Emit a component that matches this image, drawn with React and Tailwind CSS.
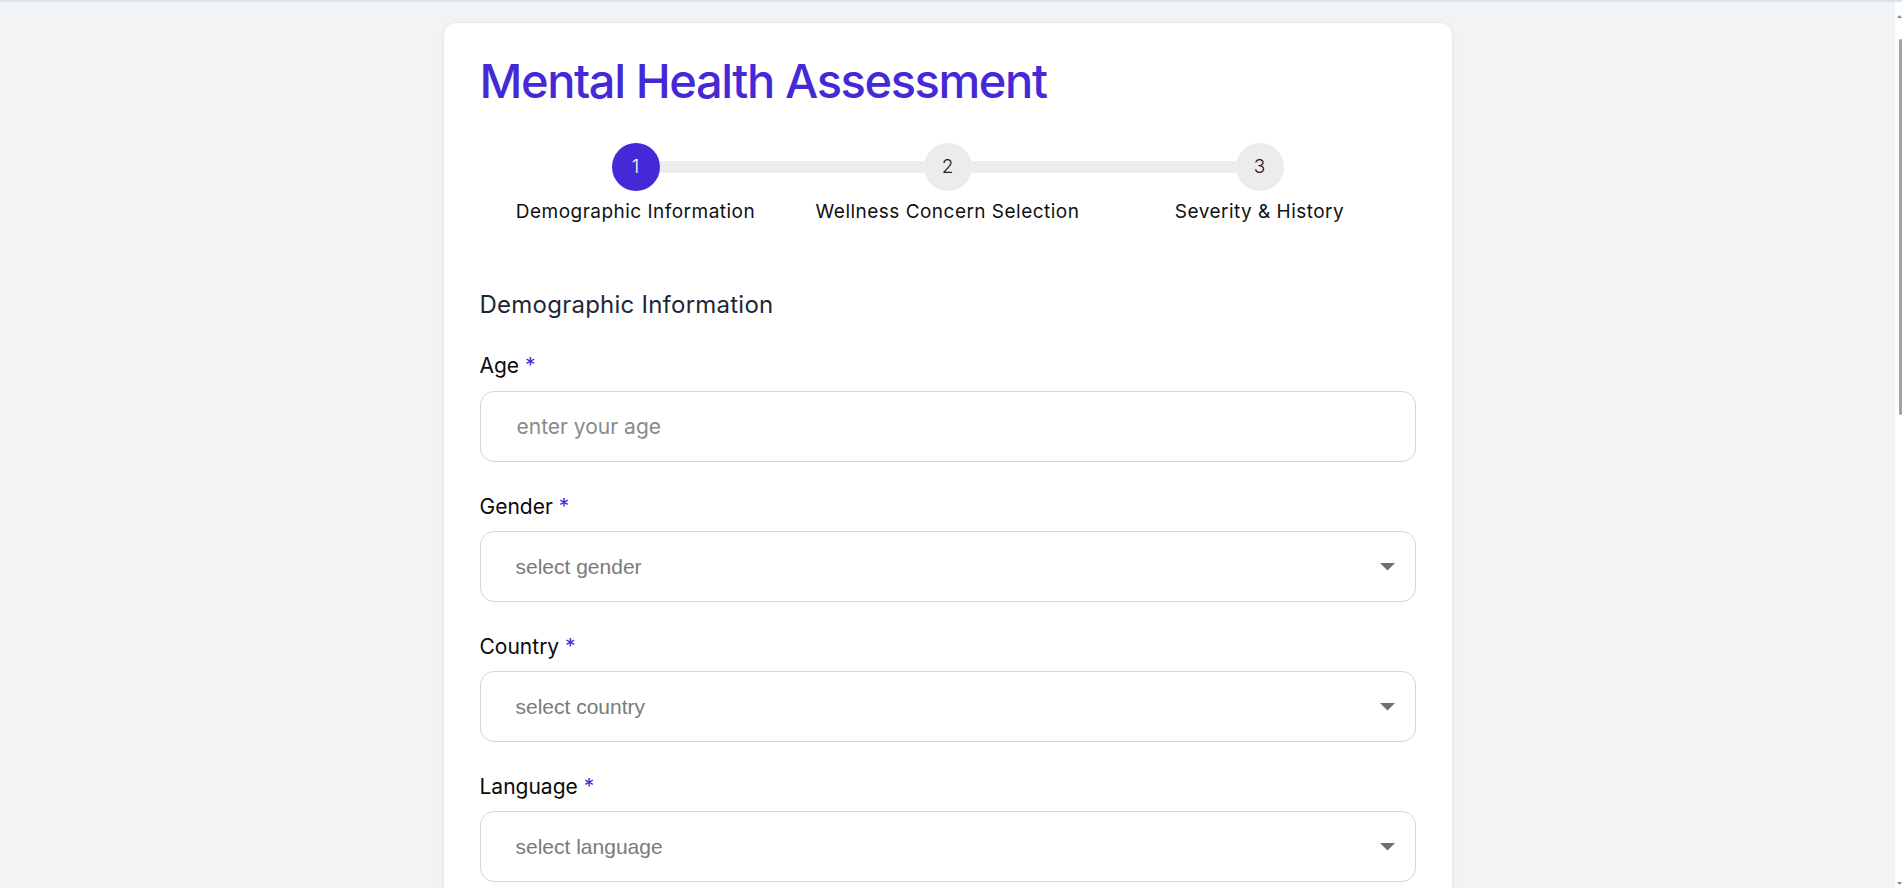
export default function App() {
  const steps = [
    { n: 1, label: "Demographic Information", active: true },
    { n: 2, label: "Wellness Concern Selection", active: false },
    { n: 3, label: "Severity & History", active: false },
  ];
  const selects = [
    { label: "Gender", placeholder: "select gender" },
    { label: "Country", placeholder: "select country" },
    { label: "Language", placeholder: "select language" },
  ];
  return (
    <div className="flex h-screen flex-col font-[family-name:Inter,sans-serif]">
      <div className="h-[2px] shrink-0 bg-[#d6e4f0]" />
      <div className="flex min-h-0 flex-1">
        <main className="min-w-0 flex-1 overflow-hidden bg-[#f2f3f5]">
          <div className="pt-[21px] pb-[60px]">
            <div className="mx-auto w-[1008px] rounded-xl bg-white px-9 pt-[34px] pb-16 shadow-[0_1px_6px_rgba(0,0,0,0.08)]">
              <h1 className="text-[47px] leading-[48px] font-[550] tracking-[-0.03em] text-[#4629d6]">
                Mental Health Assessment
              </h1>

              <div className="mt-[38px] grid grid-cols-3">
                {steps.map((s, i) => (
                  <div key={s.n} className="flex flex-col items-center">
                    <div className="flex w-full items-center">
                      <div className={"h-3 flex-1 " + (i === 0 ? "bg-transparent" : "bg-[#ececec]")} />
                      <div
                        className={
                          "flex h-12 w-12 items-center justify-center rounded-full text-[19px] font-light " +
                          (s.active ? "bg-[#4629d6] text-white" : "bg-[#ececec] text-[#222]")
                        }
                      >
                        {s.n}
                      </div>
                      <div className={"h-3 flex-1 " + (i === 2 ? "bg-transparent" : "bg-[#ececec]")} />
                    </div>
                    <div className="mt-[7px] text-[19px] leading-[28px] tracking-[0.025em] text-[#111]">
                      {s.label}
                    </div>
                  </div>
                ))}
              </div>

              <h2 className="mt-[63px] text-[24px] leading-[32px] tracking-[0.01em] text-[#1e2736]">
                Demographic Information
              </h2>

              <div className="mt-[31px]">
                <label className="block text-[21px] leading-[28px] text-[#0a0a0a]">
                  Age <span className="text-[#4629d6]">*</span>
                </label>
                <div className="mt-[11px] flex h-[71px] items-center rounded-[14px] border border-[#d4d6dc] pl-[36px]">
                  <input
                    className="w-full bg-transparent text-[21px] text-[#333] outline-none placeholder:text-[#8a8a8a]"
                    placeholder="enter your age"
                  />
                </div>
              </div>

              {selects.map((f) => (
                <div key={f.label} className="mt-[31px]">
                  <label className="block text-[21px] leading-[28px] text-[#0a0a0a]">
                    {f.label} <span className="text-[#4629d6]">*</span>
                  </label>
                  <div className="mt-[10px] flex h-[71px] items-center justify-between rounded-[14px] border border-[#d4d6dc] pr-[20px] pl-[35px]">
                    <span className="font-[family-name:'Liberation_Sans',Arial,sans-serif] text-[21px] text-[#7a7a7a]">
                      {f.placeholder}
                    </span>
                    <svg width="15" height="8" viewBox="0 0 15 8">
                      <path d="M0 0 L15 0 L7.5 7.5 Z" fill="#6f6f6f" />
                    </svg>
                  </div>
                </div>
              ))}
            </div>
          </div>
        </main>
        <div className="flex w-[7px] shrink-0 flex-col items-end bg-white">
          <svg className="mt-[13px] mr-[0.5px]" width="5" height="3" viewBox="0 0 5 3">
            <path d="M0 3 L2.5 0 L5 3 Z" fill="#8a8a8a" />
          </svg>
          <div className="mt-[21px] h-[376px] w-[3px] rounded-full bg-[#a3a3a3]" />
          <div className="flex-1" />
          <svg className="mr-[0.5px] mb-[3px]" width="5" height="3" viewBox="0 0 5 3">
            <path d="M0 0 L5 0 L2.5 3 Z" fill="#8a8a8a" />
          </svg>
        </div>
      </div>
    </div>
  );
}
